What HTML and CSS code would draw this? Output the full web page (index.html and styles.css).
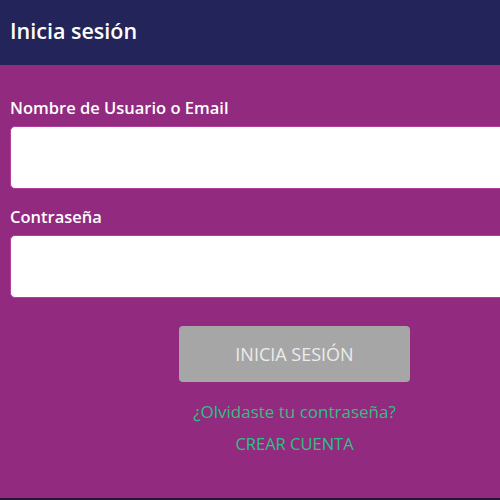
FILE: index.html
```html
<!DOCTYPE html>
<html lang="es">
<head>
    <meta charset="UTF-8">
    <meta name="viewport" content="width=device-width, initial-scale=1.0">
    <title>Inicia sesión</title>
    <link rel="stylesheet" href="styles.css">
</head>
<body>
    <div class="page">
        <header class="top-bar">
            <h1 class="title">Inicia sesión</h1>
        </header>
        <form class="login-form" onsubmit="return false;">
            <div class="input-group">
                <label for="user">Nombre de Usuario o Email</label>
                <input type="text" id="user">
            </div>
            <div class="input-group">
                <label for="pass">Contraseña</label>
                <input type="password" id="pass">
            </div>
            <div class="actions">
                <button type="submit" class="login-btn">INICIA SESIÓN</button>
                <a href="#" class="link">¿Olvidaste tu contraseña?</a>
                <a href="#" class="link caps">CREAR CUENTA</a>
            </div>
        </form>
    </div>
</body>
</html>
```

FILE: styles.css
```css
html, body {
    margin: 0;
    padding: 0;
    overflow: hidden;
}
body {
    font-family: 'Open Sans', 'Noto Sans', Arial, sans-serif;
    background: #922a80;
    color: #fff;
}
.page {
    height: 498px;
    border-bottom: 2px solid #2a1530;
    background: #922a80;
}
.top-bar {
    height: 65px;
    background: #23255a;
    display: flex;
    align-items: center;
    padding: 0 10px;
}
.title {
    margin: 0;
    font-size: 21.5px;
    font-weight: 600;
    padding-bottom: 5px;
}
.login-form {
    width: 569px;
    padding: 32px 10px 0;
}
.input-group {
    margin-bottom: 17px;
}
label {
    display: block;
    font-size: 16.5px;
    font-weight: 600;
    margin-bottom: 7px;
    line-height: 22px;
}
input {
    display: block;
    box-sizing: border-box;
    width: 100%;
    height: 63px;
    border: 1px solid #b23d9c;
    border-radius: 5px;
    background: #fff;
    font-size: 16px;
    padding: 0 12px;
}
input:focus {
    outline: none;
}
.actions {
    display: flex;
    flex-direction: column;
    align-items: center;
    padding-top: 11px;
}
.login-btn {
    width: 231px;
    height: 56px;
    background: #a6a6a6;
    color: #ececec;
    border: none;
    border-radius: 4px;
    font-family: inherit;
    font-size: 18px;
    cursor: pointer;
    margin-bottom: 14px;
}
.link {
    color: #2fc07f;
    text-decoration: none;
    font-size: 17px;
    line-height: 32px;
}
.caps {
    font-size: 16.5px;
}
```
